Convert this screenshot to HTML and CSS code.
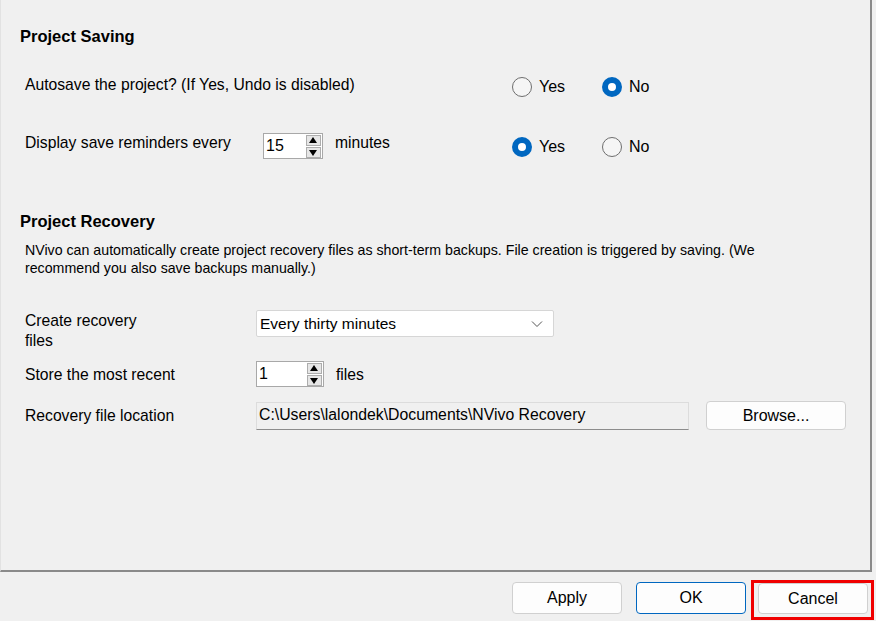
FILE: index.html
```html
<!DOCTYPE html>
<html>
    <head>
        <title>Options - Save</title>
        <meta charset="UTF-8">
        <link rel="stylesheet" href="styles.css">
    </head>
    <body>
        <div class="panel">
            <h2 class="heading saving-head">Project Saving</h2>

            <div class="row row-autosave">
                <div class="left">
                    <span class="label">Autosave the project? (If Yes, Undo is disabled)</span>
                </div>
                <div class="radios">
                    <span class="option"><span class="radio"></span>Yes</span>
                    <span class="option"><span class="radio on"></span>No</span>
                </div>
            </div>

            <div class="row row-remind">
                <div class="left">
                    <span class="label remind-label">Display save reminders every</span>
                    <span class="spin spin-minutes">
                        <span class="spin-value">15</span>
                        <span class="spin-arrows"><span class="arrow up"></span><span class="arrow down"></span></span>
                    </span>
                    <span class="label unit">minutes</span>
                </div>
                <div class="radios">
                    <span class="option"><span class="radio on"></span>Yes</span>
                    <span class="option"><span class="radio"></span>No</span>
                </div>
            </div>

            <h2 class="heading recovery-head">Project Recovery</h2>
            <p class="note">NVivo can automatically create project recovery files as short-term backups. File creation is triggered by saving. (We recommend you also save backups manually.)</p>

            <div class="field-row row-create">
                <span class="label field-label">Create recovery<br>files</span>
                <div class="combo">
                    <span>Every thirty minutes</span>
                    <svg width="12" height="8" viewBox="0 0 12 8"><path d="M1 1.5 L6 6.5 L11 1.5" fill="none" stroke="#555" stroke-width="1"/></svg>
                </div>
            </div>

            <div class="field-row row-store">
                <span class="label field-label">Store the most recent</span>
                <span class="spin spin-files">
                    <span class="spin-value">1</span>
                    <span class="spin-arrows"><span class="arrow up"></span><span class="arrow down"></span></span>
                </span>
                <span class="label unit">files</span>
            </div>

            <div class="field-row row-location">
                <span class="label field-label">Recovery file location</span>
                <div class="path">C:\Users\lalondek\Documents\NVivo Recovery</div>
                <button class="btn browse">Browse...</button>
            </div>
        </div>

        <div class="footer">
            <button class="btn">Apply</button>
            <button class="btn ok">OK</button>
            <span class="highlight"><button class="btn">Cancel</button></span>
        </div>
    </body>
</html>
```

FILE: styles.css
```css
body {
    margin: 0;
    width: 876px;
    height: 621px;
    background: #f0f0f0;
    font-family: "Liberation Sans", Arial, sans-serif;
    color: #000;
    overflow: hidden;
}
.panel {
    box-sizing: border-box;
    width: 872px;
    height: 572px;
    border-left: 1px solid #e2e2e2;
    border-right: 2px solid #8a8a8a;
    border-bottom: 2px solid #8a8a8a;
    padding-left: 19px;
    padding-top: 26px;
}
.heading {
    margin: 0;
    font-size: 16.5px;
    font-weight: bold;
    line-height: 20px;
    height: 20px;
}
.row {
    display: flex;
    align-items: center;
    height: 30px;
    padding-left: 5px;
}
.row-autosave {
    margin-top: 24px;
}
.row-remind {
    margin-top: 31px;
}
.left {
    display: flex;
    align-items: center;
    width: 487px;
}
.label {
    font-size: 15.7px;
    line-height: 20px;
}
.remind-label {
    width: 238px;
    margin-top: -6px;
}
.unit {
    margin-left: 12px;
    margin-top: -6px;
}
.radios {
    display: flex;
    font-size: 16px;
    margin-top: 3px;
}
.row-remind .radios {
    margin-top: 1px;
}
.option {
    display: flex;
    align-items: center;
    width: 90px;
}
.radio {
    box-sizing: border-box;
    width: 20px;
    height: 20px;
    border: 1px solid #6e6e6e;
    border-radius: 50%;
    background: #f5f5f5;
    margin-right: 7px;
}
.radio.on {
    border: 6px solid #0067c0;
    background: #fff;
}
.spin {
    box-sizing: border-box;
    display: flex;
    align-items: center;
    height: 26px;
    background: #fff;
    border: 1px solid #a8a8a8;
}
.spin-minutes {
    width: 60px;
}
.spin-files {
    width: 68px;
}
.spin-value {
    flex: 1;
    padding-left: 2px;
    font-size: 16px;
}
.spin-arrows {
    display: flex;
    flex-direction: column;
    gap: 1px;
    margin-right: 1px;
}
.arrow {
    box-sizing: border-box;
    width: 15px;
    height: 11px;
    border: 1px solid #adadad;
    background: #e6e6e6;
    position: relative;
}
.arrow::after {
    content: "";
    position: absolute;
    left: 2px;
    border-left: 4.5px solid transparent;
    border-right: 4.5px solid transparent;
}
.arrow.up::after {
    top: 1px;
    border-bottom: 6px solid #000;
}
.arrow.down::after {
    top: 2px;
    border-top: 6px solid #000;
}
.recovery-head {
    margin-top: 50px;
}
.note {
    margin: 10px 0 0 5px;
    font-size: 14.2px;
    line-height: 18px;
    width: 800px;
}
.field-row {
    display: flex;
    align-items: flex-start;
    padding-left: 5px;
}
.field-label {
    width: 231px;
}
.row-create {
    margin-top: 33px;
}
.row-create .field-label {
    margin-top: 1px;
}
.combo {
    box-sizing: border-box;
    width: 298px;
    height: 27px;
    background: #fff;
    border: 1px solid #d6d6d6;
    border-radius: 2px;
    display: flex;
    align-items: center;
    justify-content: space-between;
    padding: 0 10px 0 3px;
    font-size: 15.5px;
}
.row-store {
    margin-top: 10px;
    align-items: center;
}
.row-store .field-label {
    margin-top: 1px;
}
.row-store .unit {
    margin-top: 2px;
}
.row-location {
    margin-top: 15px;
    align-items: center;
}
.path {
    box-sizing: border-box;
    width: 433px;
    height: 28px;
    border: 1px solid #dcdcdc;
    border-bottom: 1px solid #8c8c8c;
    background: #f0f0f0;
    padding-left: 2px;
    font-size: 15.8px;
    line-height: 24px;
}
.btn {
    box-sizing: border-box;
    width: 110px;
    height: 32px;
    background: #fdfdfd;
    border: 1px solid #d0d0d0;
    border-radius: 4px;
    font-family: "Liberation Sans", Arial, sans-serif;
    font-size: 16px;
    color: #000;
    padding: 0;
}
.browse {
    width: 140px;
    height: 29px;
    margin-left: 17px;
    margin-top: -1px;
}
.footer {
    display: flex;
    align-items: flex-start;
    justify-content: flex-end;
    height: 49px;
    padding-right: 2px;
}
.footer .btn {
    margin-left: 14px;
    margin-top: 10px;
}
.footer .ok {
    border-color: #0067c0;
}
.highlight {
    display: flex;
    align-items: flex-start;
    box-sizing: border-box;
    width: 123px;
    height: 40px;
    border: 3px solid #f00000;
    margin-left: 5px;
    margin-top: 8px;
}
.highlight .btn {
    margin-left: 4px;
    margin-top: 0;
    height: 31px;
}
```
